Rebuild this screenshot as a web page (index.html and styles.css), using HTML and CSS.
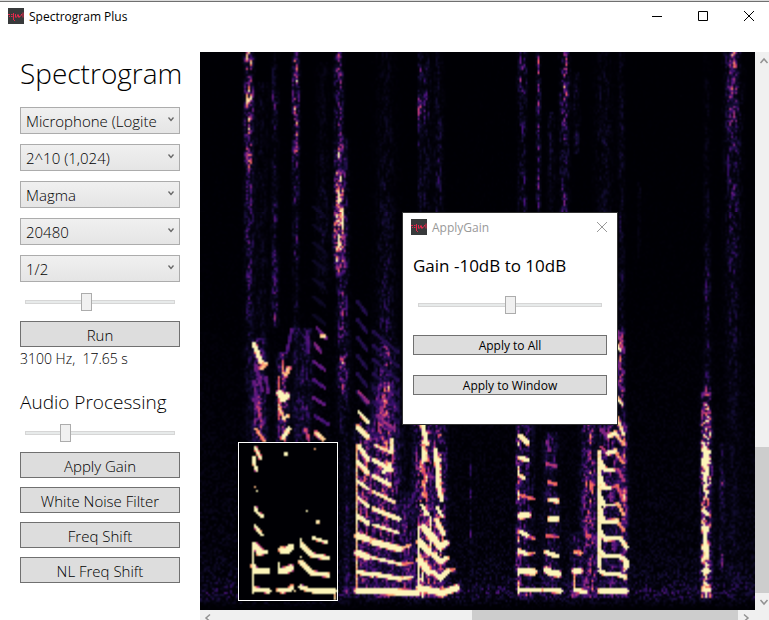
FILE: index.html
```html
<!DOCTYPE html>
<html lang="en">
<head>
<meta charset="utf-8">
<title>Spectrogram Plus</title>
<link rel="stylesheet" href="styles.css">
</head>
<body>
<svg class="defs" aria-hidden="true">
  <symbol id="app-icon" viewBox="0 0 16 16">
    <rect width="16" height="16" fill="#383a3b"/>
    <path d="M0 6.500h2M3 6.500h1.500M1 8.500h1M3 8.500h1.500M5.500 5v7M7.500 6v3.500M8.500 9.500v-1M9.500 8.500v-2M10.500 6.500v3M11.500 8v1.500M12.500 8.500v-1M13.500 7.500v-1.500M15 4.500v5M6 12.500h1" fill="none" stroke="#e5284c"/>
  </symbol>
  <symbol id="chevron" viewBox="0 0 8 8"><path d="M1.500 1.500 4 4.500l2.500-3" fill="none" stroke="#666" stroke-width="1.300"/></symbol>
  <symbol id="arrow" viewBox="0 0 10 10"><path d="M1.500 7 5 3l3.500 4" fill="none" stroke="#929292" stroke-width="1.500"/></symbol>
</svg>

<div class="window">
  <header class="titlebar">
    <svg class="app-icon"><use href="#app-icon"/></svg>
    <span class="titlebar-name">Spectrogram Plus</span>
    <div class="window-buttons">
      <button type="button" aria-label="Minimize"><svg viewBox="0 0 12 12"><path d="M1 6.500h10"/></svg></button>
      <button type="button" aria-label="Maximize"><svg viewBox="0 0 12 12"><path d="M1.500 1.500h9v9h-9z"/></svg></button>
      <button type="button" aria-label="Close"><svg viewBox="0 0 12 12"><path d="m1 1 10 10M11 1 1 11"/></svg></button>
    </div>
  </header>

  <div class="workspace">
    <aside class="sidebar">
      <h1>Spectrogram</h1>
      <div class="selects">
        <div class="combo"><select aria-label="Input device"><option>Microphone (Logitech)</option></select><svg><use href="#chevron"/></svg></div>
        <div class="combo"><select aria-label="FFT size"><option>2^10 (1,024)</option></select><svg><use href="#chevron"/></svg></div>
        <div class="combo"><select aria-label="Colormap"><option>Magma</option></select><svg><use href="#chevron"/></svg></div>
        <div class="combo"><select aria-label="Sample rate"><option>20480</option></select><svg><use href="#chevron"/></svg></div>
        <div class="combo"><select aria-label="Overlap"><option>1/2</option></select><svg><use href="#chevron"/></svg></div>
      </div>
      <input class="slider" type="range" min="0" max="100" value="40" aria-label="Brightness">
      <button class="button" type="button">Run</button>
      <p class="readout">3100 Hz,&nbsp; 17.65 s</p>
      <h2>Audio Processing</h2>
      <input class="slider" type="range" min="0" max="100" value="25" aria-label="Processing amount">
      <div class="actions">
        <button class="button" type="button">Apply Gain</button>
        <button class="button" type="button">White Noise Filter</button>
        <button class="button" type="button">Freq Shift</button>
        <button class="button" type="button">NL Freq Shift</button>
      </div>
    </aside>

    <main class="viewer">
      <div class="plot">
        <canvas id="spectrogram" width="278" height="279" role="img" aria-label="Spectrogram"></canvas>
        <div class="selection"></div>
        <section class="dialog" role="dialog" aria-labelledby="dialog-name">
          <header class="dialog-bar">
            <svg class="app-icon"><use href="#app-icon"/></svg>
            <span id="dialog-name">ApplyGain</span>
            <button type="button" aria-label="Close dialog"><svg viewBox="0 0 12 12"><path d="m1 1 10 10M11 1 1 11"/></svg></button>
          </header>
          <div class="dialog-body">
            <label for="gain">Gain -10dB to 10dB</label>
            <input class="slider" id="gain" type="range" min="-10" max="10" value="0">
            <button class="button small" type="button">Apply to All</button>
            <button class="button small" type="button">Apply to Window</button>
          </div>
        </section>
      </div>
      <div class="vbar">
        <svg><use href="#arrow"/></svg>
        <div class="vbar-space"></div>
        <div class="vbar-thumb"></div>
        <svg class="down"><use href="#arrow"/></svg>
      </div>
      <div class="hbar">
        <svg class="left"><use href="#arrow"/></svg>
        <div class="hbar-space"></div>
        <div class="hbar-thumb"></div>
        <svg class="right"><use href="#arrow"/></svg>
      </div>
    </main>
  </div>
</div>
<script src="spectrogram.js"></script>
</body>
</html>
```
FILE: styles.css
```css
* { box-sizing: border-box; }

body {
  margin: 0;
  background: #fff;
  color: #000;
  font-family: "Open Sans", "Noto Sans", sans-serif;
}

h1, h2, p { margin: 0; }
button, select, input { font: inherit; color: inherit; margin: 0; }
.defs { position: absolute; width: 0; height: 0; }

.window {
  display: flex;
  flex-direction: column;
  height: 100vh;
  overflow: hidden;
  border-top: 1px solid #dcdcdc;
}

.titlebar {
  display: flex;
  align-items: center;
  height: 31px;
  flex: none;
  border-top: 1px solid #707070;
  padding: 0 0 2px 8px;
  font-size: 12px;
}
.app-icon { width: 16px; height: 16px; flex: none; }
.titlebar-name { margin-left: 5px; font-size: 12px; }
.window-buttons { display: flex; margin-left: auto; }
.window-buttons button {
  display: grid;
  place-items: center;
  width: 46px;
  height: 28px;
  border: 0;
  padding: 0 0 0 6px;
  background: none;
}
.window-buttons svg, .dialog-bar button svg {
  width: 12px;
  height: 12px;
  fill: none;
  stroke: #000;
}

.workspace { display: flex; flex: 1; min-height: 0; }

.sidebar {
  display: flex;
  flex-direction: column;
  width: 200px;
  flex: none;
  padding: 20px 20px 0;
  font-weight: 300;
  font-size: 15px;
}
h1 { font-size: 28px; line-height: 43px; font-weight: 300; margin-bottom: 12px; white-space: nowrap; }
h2 { font-size: 19px; line-height: 28px; font-weight: 300; margin: 17px 0 7px; white-space: nowrap; }

.selects { display: grid; gap: 10px; margin-bottom: 10px; }
.combo { position: relative; height: 27px; }
.combo select {
  appearance: none;
  display: block;
  width: 100%;
  height: 100%;
  border: 1px solid #acacac;
  border-radius: 0;
  padding: 1px 22px 0 5px;
  background: linear-gradient(#f0f0f0, #e5e5e5);
  text-overflow: clip;
}
.combo svg { position: absolute; right: 5px; top: 9px; width: 8px; height: 8px; pointer-events: none; }

.slider {
  appearance: none;
  display: block;
  width: 100%;
  height: 20px;
  padding: 0 5px;
  background: none;
}
.slider::-webkit-slider-runnable-track {
  height: 4px;
  border: 1px solid #d6d6d6;
  background: #e7eaea;
}
.slider::-webkit-slider-thumb {
  appearance: none;
  width: 11px;
  height: 18px;
  margin-top: -8px;
  border: 1px solid #acacac;
  background: #f0f0f0;
}

.button {
  width: 100%;
  height: 26px;
  border: 1px solid #707070;
  padding: 1px 0 0;
  background: #ddd;
  line-height: 22px;
}
.sidebar > .button { margin-top: 9px; }
.readout { font-size: 14px; line-height: 24px; }
.actions { display: grid; gap: 9px; margin-top: 9px; }

.viewer {
  display: grid;
  grid-template-columns: minmax(0, 1fr) 14px;
  grid-template-rows: minmax(0, 1fr) 10px;
  flex: 1;
  min-width: 0;
  padding-top: 20px;
}
.plot { position: relative; background: #000; }
.plot canvas { display: block; width: 100%; height: 100%; }
.selection {
  position: absolute;
  left: 38px;
  top: 390px;
  width: 100px;
  height: 159px;
  border: 1px solid #fff;
}

.dialog {
  position: absolute;
  left: 202px;
  top: 160px;
  width: 216px;
  border: 1px solid #333;
  background: #fff;
}
.dialog-bar {
  display: flex;
  align-items: center;
  gap: 5px;
  height: 28px;
  padding: 0 9px 0 8px;
  color: #999;
  font-size: 12px;
}
.dialog-bar button { display: flex; margin-left: auto; border: 0; padding: 0; background: none; }
.dialog-bar button svg { stroke: #999; }
.dialog-body { display: grid; padding: 10px 10px 29px; }
.dialog-body label { font-size: 17px; line-height: 30px; margin-bottom: 14px; }
.dialog-body .small { height: 20px; margin-top: 20px; padding: 1px 0 0; font-size: 12px; line-height: 17px; }

.vbar, .hbar { display: flex; background: #f0f0f0; overflow: hidden; }
.vbar { flex-direction: column; align-items: center; }
.vbar svg, .hbar svg { width: 10px; height: 10px; flex: none; }
.vbar svg { margin: 4px 0 3px 3px; }
.vbar .down { transform: rotate(180deg); }
.vbar-space { flex: 378; }
.vbar-thumb { flex: 146; width: 100%; background: #cdcdcd; }
.hbar { grid-column: 1 / -1; }
.hbar svg { margin: 3px 4px 0 3px; }
.hbar .left { transform: rotate(-90deg); }
.hbar .right { transform: rotate(90deg); margin-right: 18px; }
.hbar-space { flex: 255; }
.hbar-thumb { flex: 266; background: #cdcdcd; }
```
FILE: spectrogram.js
```js
const canvas = document.getElementById("spectrogram");
const ctx = canvas.getContext("2d");
const W = canvas.width, H = canvas.height;

// Each cell covers two plot units in both directions.
const CELL = 2;
const grid = new Float32Array(W * H);

let seed = 20480;
function rand() {
  seed = (seed * 1664525 + 1013904223) >>> 0;
  return seed / 4294967296;
}

const MAGMA = [
  [0, 0, 4], [20, 14, 54], [59, 15, 112], [100, 26, 128], [140, 41, 129],
  [183, 55, 121], [222, 73, 104], [247, 112, 92], [254, 159, 109],
  [254, 207, 146], [252, 245, 185]
];
function magma(v) {
  const t = Math.max(0, Math.min(0.9999, v)) * 10;
  const i = Math.floor(t), f = t - i;
  return MAGMA[i].map((c, k) => c + (MAGMA[i + 1][k] - c) * f);
}

function levelAt(stops, y) {
  if (y < stops[0][0] || y > stops[stops.length - 1][0]) return 0;
  for (let i = 1; i < stops.length; i++) {
    if (y <= stops[i][0]) {
      const [y0, a] = stops[i - 1], [y1, b] = stops[i];
      return a + (b - a) * (y - y0) / (y1 - y0 || 1);
    }
  }
  return 0;
}

// Broadband noise: centre, half width, [y, level] stops.
// Successive rows share some of their noise, which gives short vertical flecks.
function band(cx, half, stops) {
  const x0 = Math.floor((cx - half * 1.6) / CELL), x1 = Math.ceil((cx + half * 1.6) / CELL);
  const last = {};
  for (let y = 0; y < H; y++) {
    const level = levelAt(stops, y * CELL);
    if (!level) continue;
    for (let x = Math.max(0, x0); x <= Math.min(W - 1, x1); x++) {
      const d = (x * CELL + 1 - cx) / half;
      last[x] = (last[x] ?? 0.5) * 0.55 + rand() * 0.45;
      const r = Math.max(0, Math.min(1, (last[x] - 0.5) * 1.9 + 0.5));
      grid[y * W + x] += level * Math.exp(-d * d) * (0.1 + 1.6 * r * r);
    }
  }
}

// Harmonic trace: level, thickness step, then x, y pairs.
const RADIUS = [0, 1.4, 1.9, 2.7];
function trace(level, thick, ...p) {
  if (p.length === 2) p.push(p[0], p[1]);
  const radius = RADIUS[thick];
  for (let i = 0; i + 3 < p.length; i += 2) {
    const [ax, ay, bx, by] = p.slice(i, i + 4);
    const pad = radius + 3;
    const len = (bx - ax) ** 2 + (by - ay) ** 2 || 1;
    for (let y = Math.floor((Math.min(ay, by) - pad) / CELL); y <= (Math.max(ay, by) + pad) / CELL; y++) {
      for (let x = Math.floor((Math.min(ax, bx) - pad) / CELL); x <= (Math.max(ax, bx) + pad) / CELL; x++) {
        if (x < 0 || y < 0 || x >= W || y >= H) continue;
        const px = x * CELL + 1, py = y * CELL + 1;
        const t = Math.max(0, Math.min(1, ((px - ax) * (bx - ax) + (py - ay) * (by - ay)) / len));
        const d = Math.hypot(px - ax - t * (bx - ax), py - ay - t * (by - ay));
        const v = level * Math.max(0, Math.min(1, 2.5 - (d / radius) * 1.5));
        const k = y * W + x;
        if (d < radius * 1.4) grid[k] = Math.max(grid[k], v * (0.9 + 0.2 * rand()));
      }
    }
  }
}

// Background hiss, strongest near the bottom of the range.
for (let y = 0; y < H; y++) {
  const py = y * CELL;
  const base = levelAt([[0, 0.01], [250, 0.02], [400, 0.05], [500, 0.08], [528, 0.12], [540, 0.2], [547, 0.12], [554, 0.03], [558, 0]], py);
  for (let x = 0; x < W; x++) grid[y * W + x] = base * (0.1 + 1.5 * rand() ** 2);
}

[
  [49, 4, [[0, .55], [10, .6], [22, .3], [40, .6], [105, .5], [140, .3], [165, .26], [180, .3], [205, .22], [300, .14], [390, .05]]],
  [61, 7, [[30, .08], [390, .08]]],
  [75, 3, [[0, .12], [30, .14], [44, .3], [60, .14], [180, .18], [235, .22], [262, .35], [275, .15]]],
  [96, 3, [[0, .45], [15, .4], [22, .7], [44, .55], [80, .45], [138, .3], [158, .1], [175, .18], [190, .24], [220, .12], [330, .12], [390, .12]]],
  [123, 6, [[10, .05], [130, .08], [165, .14], [240, .06]]],
  [139, 4, [[0, .38], [45, .33], [75, .26], [90, .45], [150, .55], [168, 1], [195, 1.1], [208, .6], [225, .2]]],
  [143, 5, [[85, .18], [215, .32], [250, .28], [290, .36], [315, .45], [350, .2], [380, .08]]],
  [186, 9, [[0, .06], [60, .07], [190, .12], [280, .15], [300, .32], [330, .28], [390, .18]]],
  [220, 2, [[0, .2], [30, .28], [55, .4], [80, .2], [110, .1], [160, .14]]],
  [226, 5, [[0, .1], [60, .22], [75, .1], [120, .14], [160, .1]]],
  [239, 4, [[0, .08], [80, .14], [160, .14]]],
  [323, 4, [[0, .2], [28, .36], [45, .18], [100, .13], [145, .24], [160, .14]]],
  [339, 2, [[0, .34], [40, .34], [60, .24], [160, .24]]],
  [365, 4, [[0, .42], [20, .48], [50, .42], [70, .25], [160, .22]]],
  [377, 3, [[20, .1], [70, .15], [100, .1]]],
  [352, 4, [[60, .12], [160, .08]]],
  [404, 8, [[0, .05], [60, .11], [110, .1], [160, .08]]],
  [422, 3, [[0, .08], [160, .14], [270, .12], [290, .45], [350, .35], [380, .25]]],
  [440, 1, [[130, .15], [205, .1]]],
  [508, 3, [[0, .04], [215, .13], [232, .26], [260, .15], [330, .18], [342, .5]]],
  [534, 7, [[0, .33], [45, .34], [80, .28], [150, .2], [240, .14], [360, .07], [540, .04]]],
  [534, 3, [[0, .25], [12, .1], [40, .25], [60, .1]]],
  [523, 2, [[390, .1], [425, .18], [430, .36], [460, .2], [495, .3], [518, .18]]],
  [59, 6, [[285, .3], [390, .3]]],
  [83, 5, [[300, .26], [328, .5], [345, .5], [365, .42], [390, .42]]],
  [105, 7, [[275, .2], [300, .18], [390, .2]]],
  [147, 3, [[380, .12], [540, .16]]],
  [165, 8, [[370, .24], [400, .36], [540, .28]]],
  [186, 13, [[330, .2], [385, .36], [430, .42], [490, .28], [545, .2]]],
  [207, 7, [[440, .12], [490, .28], [545, .22]]],
  [224, 8, [[365, .5], [545, .52]]],
  [240, 6, [[365, .36], [400, .56], [545, .56]]],
  [271, 1, [[400, .16], [440, .16], [500, .2]]],
  [319, 2, [[370, .55], [545, .55]]],
  [327, 6, [[370, .2], [545, .2]]],
  [352, 7, [[380, .18], [545, .18]]],
  [376, 5, [[480, .18], [545, .24]]],
  [390, 7, [[370, .46], [400, .3], [430, .44], [545, .32]]],
  [412, 12, [[370, .28], [545, .16]]],
  [425, 3, [[370, .36], [545, .4]]],
  [507, 4, [[340, .5], [352, .5], [366, 1], [390, 1.5], [430, 1.6], [440, .9], [455, 1.1], [545, 1.4]]]
].forEach(b => band(...b));

// Repeating faint downward sweeps.
for (let y = 155; y < 270; y += 18) trace(.12, 1, 114, y, 125, y + 9);
for (let y = 250; y < 350; y += 18) trace(.2, 1, 158, y, 167, y + 12);
for (let y = 280; y < 370; y += 14) trace(.2, 1, 174, y, 198, y + 20);

[
  // upper left syllables
  [1, 2, 54, 292, 61, 310], [.75, 2, 61, 316, 66, 312], [.35, 1, 56, 314, 62, 338], [.35, 1, 54, 330, 60, 366],
  [.35, 1, 66, 325, 68, 340], [.35, 1, 54, 348, 63, 372], [.7, 1, 56, 377, 65, 390], [.6, 1, 79, 326, 79, 366],
  [1, 3, 80, 341, 83, 347, 87, 344], [.75, 2, 86, 323, 89, 316], [.75, 1, 79, 354, 84, 366, 88, 364], [.9, 2, 83, 386, 89, 377],
  [.3, 1, 92, 278, 87, 300], [.3, 1, 107, 279, 109, 300], [.75, 1, 122, 284, 125, 284], [.36, 1, 117, 276, 126, 286],
  [.4, 1, 115, 292, 121, 300], [.35, 1, 113, 309, 125, 318], [.3, 1, 114, 328, 125, 336], [.35, 1, 114, 346, 125, 353],
  [.3, 1, 115, 364, 128, 372], [.8, 2, 116, 381, 123, 387], [.55, 1, 106, 378, 109, 388],
  // long syllable right of the selection
  [.75, 1, 157, 396, 157, 540], [.45, 1, 159, 340, 168, 350], [1, 1, 159, 360, 168, 370], [.95, 2, 158, 375, 168, 385],
  [1, 2, 159, 394, 168, 407], [1, 2, 158, 410, 168, 421], [1, 1, 158, 429, 168, 437], [1, 1, 159, 446, 168, 454],
  [1, 2, 158, 464, 168, 471], [1, 3, 158, 484, 168, 487], [1, 3, 158, 501, 168, 505], [1, 2, 158, 520, 173, 523],
  [1, 3, 158, 539, 175, 539, 217, 541], [.45, 1, 177, 363, 195, 378], [.8, 1, 175, 393, 192, 401, 192, 387],
  [1, 2, 174, 408, 191, 418], [1, 2, 184, 420, 190, 413], [.9, 2, 174, 424, 190, 433], [.8, 1, 174, 440, 194, 450],
  [1, 2, 174, 457, 199, 467], [.9, 1, 174, 473, 199, 481], [1, 3, 174, 490, 200, 497], [.75, 1, 200, 497, 211, 493],
  [.9, 1, 174, 506, 200, 512], [.65, 1, 200, 512, 212, 511], [1, 2, 174, 522, 200, 527], [.8, 1, 200, 527, 213, 525],
  // noisy syllable under the dialog
  [1, 1, 219, 475, 219, 542], [1, 2, 223, 372, 227, 392], [.8, 2, 224, 395, 227, 408], [.6, 1, 222, 412, 226, 426],
  [.65, 1, 224, 430, 226, 445], [1, 1, 222, 453, 229, 463], [1, 3, 224, 475, 232, 486], [1, 3, 220, 490, 229, 500],
  [1, 3, 220, 508, 229, 520], [1, 3, 220, 536, 243, 541, 257, 536], [1, 2, 236, 398, 239, 430], [.95, 2, 238, 430, 242, 448],
  [1, 1, 237, 455, 243, 465], [1, 2, 237, 468, 244, 482], [1, 3, 233, 484, 240, 495, 246, 491], [1, 2, 233, 502, 241, 510, 247, 506],
  [1, 2, 233, 520, 241, 526, 248, 519], [.7, 1, 250, 519, 255, 517], [.8, 1, 231, 465, 231, 500],
  // short syllables
  [1, 2, 321, 384, 328, 391], [1, 2, 321, 406, 328, 408], [.8, 2, 321, 424, 324, 426], [.6, 1, 320, 443, 334, 447],
  [1, 3, 321, 464, 328, 463], [.95, 2, 321, 480, 327, 483], [.6, 1, 327, 483, 335, 487], [1, 2, 320, 499, 327, 502], [.7, 1, 327, 502, 334, 501],
  [1, 3, 321, 519, 334, 520], [1, 2, 320, 538, 341, 538],
  [.4, 1, 348, 390, 350, 398], [.5, 1, 347, 412, 356, 414], [.65, 1, 349, 430, 356, 432], [.95, 2, 351, 448, 358, 449],
  [1, 2, 350, 467, 358, 467], [.6, 1, 348, 484, 358, 485], [1, 2, 347, 500, 350, 502, 358, 504],
  [1, 3, 347, 518, 352, 521, 359, 522], [1, 2, 346, 538, 361, 539],
  [.7, 2, 376, 500, 381, 501], [1, 3, 376, 519, 380, 519], [1, 2, 376, 538, 386, 540], [.7, 1, 375, 524, 375, 535],
  [.6, 1, 388, 484, 391, 484], [.6, 1, 391, 430, 393, 440],
  // arched harmonics
  [.85, 1, 400, 400, 400, 515], [1, 2, 400, 539, 427, 539], [1, 2, 401, 519, 406, 522, 418, 522, 426, 525],
  [1, 2, 401, 499, 405, 504, 420, 504, 427, 509, 427, 515], [1, 2, 401, 480, 406, 487, 421, 486, 427, 495],
  [1, 2, 401, 458, 404, 470, 418, 469], [.65, 1, 418, 469, 424, 478], [1, 2, 401, 445, 405, 453], [.85, 1, 405, 453, 414, 453],
  [.7, 1, 414, 453, 419, 452, 424, 462], [1, 2, 401, 425, 404, 435, 410, 436], [.6, 1, 410, 436, 418, 434, 424, 448],
  [1, 2, 401, 410, 406, 418, 413, 418], [.5, 1, 413, 418, 419, 417, 424, 428],
  [.5, 1, 402, 395, 408, 402], [1, 2, 409, 401, 416, 399], [.7, 1, 416, 399, 423, 410],
  [.4, 1, 402, 378, 409, 385], [1, 2, 410, 384, 416, 381], [.75, 1, 416, 381, 424, 392],
  [.8, 1, 418, 366, 424, 382], [.8, 1, 418, 346, 423, 352], [.85, 1, 418, 294, 421, 298], [.4, 1, 418, 280, 425, 300],
  [.35, 1, 418, 312, 424, 320], [.35, 1, 418, 330, 424, 338],
  // narrow click
  [1, 2, 505, 398, 510, 400], [1, 2, 505, 407, 507, 416], [1, 1, 505, 438, 507, 440], [1, 2, 505, 459, 508, 462],
  [1, 2, 505, 475, 508, 505], [1, 2, 505, 519, 509, 519], [1, 2, 505, 538, 510, 538]
].forEach(t => trace(...t));

// The selected window holds a noise-filtered copy.
for (let y = 195; y < 275; y++) for (let x = 19; x < 69; x++) grid[y * W + x] = 0;
[
  [1, 1, 55, 395, 61, 407], [.95, 1, 54, 406, 54, 411, 57, 419], [.8, 1, 55, 435], [.95, 1, 57, 439],
  [.95, 1, 55, 455, 57, 460, 63, 465], [.9, 1, 55, 474, 62, 483], [1, 1, 53, 492, 53, 540],
  [1, 3, 55, 494, 61, 500], [1, 2, 58, 501, 66, 500], [1, 2, 53, 514, 56, 518], [1, 3, 55, 519, 67, 519],
  [1, 2, 54, 537, 69, 539], [1, 1, 69, 540, 69, 541], [.9, 1, 85, 403, 87, 401], [.8, 1, 115, 397],
  [1, 3, 82, 498, 87, 499, 91, 495], [.95, 1, 79, 512, 79, 518], [1, 3, 81, 519, 87, 518, 91, 516],
  [1, 2, 79, 538, 83, 539, 91, 537, 92, 535], [.8, 1, 95, 539], [1, 1, 101, 487, 101, 493],
  [1, 2, 102, 493, 112, 503, 128, 506], [1, 1, 114, 486, 119, 488, 126, 490], [1, 2, 101, 510, 112, 521, 128, 523],
  [.9, 1, 129, 524], [1, 2, 101, 535, 106, 537, 114, 539, 135, 539], [.8, 1, 135, 540, 135, 547],
  [.8, 1, 107, 459], [.8, 1, 117, 469, 119, 471], [.8, 1, 101, 505]
].forEach(t => trace(...t));

// Expand the contrast: quiet cells sink to black, loud ones saturate.
const image = ctx.createImageData(W, H);
grid.forEach((v, i) => {
  const [r, g, b] = magma(1.3 * v ** 1.4);
  image.data.set([r, g, b, 255], i * 4);
});
ctx.putImageData(image, 0, 0);
```
